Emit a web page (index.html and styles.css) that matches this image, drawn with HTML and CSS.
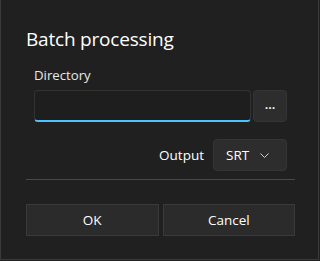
FILE: index.html
```html
<!DOCTYPE html>
<html lang="en">
<head>
  <meta charset="UTF-8">
  <title>Batch processing</title>
  <link rel="stylesheet" href="styles.css">
</head>
<body>
  <div class="dialog">
    <h2 class="dialog-title">Batch processing</h2>
    <form class="batch-form">
      <label class="field-label" for="dir">Directory</label>
      <div class="dir-row">
        <input type="text" id="dir" class="dir-input">
        <button type="button" class="browse-btn">...</button>
      </div>
      <div class="output-row">
        <span class="output-label">Output</span>
        <button type="button" class="combo">
          <span>SRT</span>
          <svg width="9" height="5" viewBox="0 0 9 5"><path d="M0.5 0.5 L4.5 4.5 L8.5 0.5" fill="none" stroke="#cfcfcf" stroke-width="1"/></svg>
        </button>
      </div>
    </form>
    <hr class="divider">
    <div class="actions">
      <button type="button" class="action-btn">OK</button>
      <button type="button" class="action-btn">Cancel</button>
    </div>
  </div>
</body>
</html>
```

FILE: styles.css
```css
/* Dialog shell */
body {
    margin: 0;
    background-color: #202020;
    font-family: "Open Sans", "Noto Sans", sans-serif;
    color: #ffffff;
}

.dialog {
    box-sizing: border-box;
    width: 319px;
    height: 260px;
    padding: 26px 23px 0 25px;
    border: 1px solid #3a3a3a;
    border-top: none;
    background-color: #202020;
}

.dialog-title {
    margin: 0;
    font-size: 19px;
    font-weight: 400;
    letter-spacing: -0.2px;
    line-height: 27px;
}

/* Form */
.batch-form {
    padding: 0 8px;
}

.field-label {
    display: block;
    margin-top: 12px;
    font-size: 13.2px;
    line-height: 20px;
    color: #e8e8e8;
}

.dir-row {
    display: flex;
    gap: 2px;
    margin-top: 5px;
}

.dir-input {
    flex: 1;
    min-width: 0;
    height: 32px;
    box-sizing: border-box;
    background-color: #1e1e1e;
    border: 1px solid #333333;
    border-bottom: 2px solid #4cc2ff;
    border-radius: 4px;
    color: #ffffff;
    outline: none;
}

.browse-btn {
    flex: none;
    width: 34px;
    height: 32px;
    background-color: #2d2d2d;
    border: 1px solid #353535;
    border-radius: 4px;
    color: #ffffff;
    font-family: inherit;
    font-size: 13px;
    font-weight: 600;
    line-height: 1;
    padding: 0 0 4px;
}

.output-row {
    display: flex;
    justify-content: flex-end;
    align-items: center;
    gap: 9px;
    margin-top: 17px;
}

.output-label {
    font-size: 13.5px;
}

.combo {
    display: flex;
    align-items: center;
    justify-content: space-between;
    width: 74px;
    height: 32px;
    padding: 0 17px 0 12px;
    background-color: #2d2d2d;
    border: 1px solid #353535;
    border-radius: 4px;
    color: #ffffff;
    font-family: inherit;
    font-size: 13.5px;
}

.divider {
    margin: 8px 0 0;
    border: none;
    border-top: 1px solid #484848;
}

/* Button styles */
.actions {
    display: grid;
    grid-template-columns: 1fr 1fr;
    gap: 4px;
    margin-top: 24px;
}

.action-btn {
    height: 32px;
    background-color: #2b2b2b;
    border: 1px solid #3a3a3a;
    border-radius: 0;
    color: #ffffff;
    font-family: inherit;
    font-size: 13.5px;
}
```
